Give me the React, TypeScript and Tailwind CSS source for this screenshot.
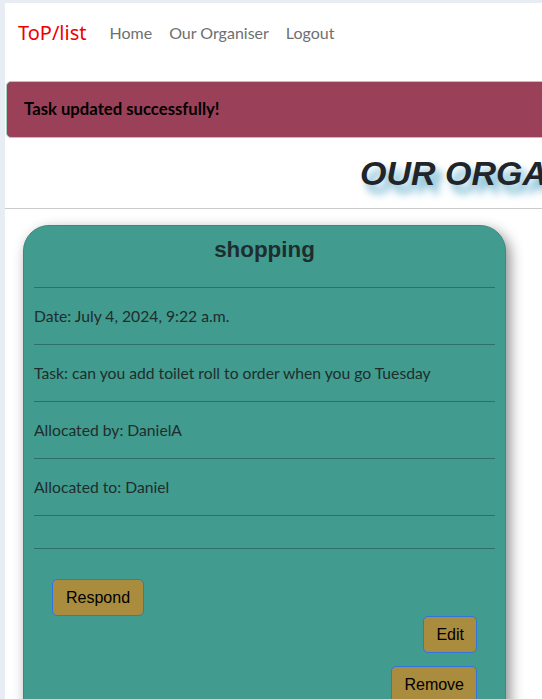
import React from "react";

const body = { fontFamily: 'Lato, "Noto Sans", sans-serif' };
const arial = { fontFamily: '"Liberation Sans", Arial, sans-serif' };

function Row({ children }: { children?: React.ReactNode }) {
  return (
    <>
      <div className="h-px bg-[#2f6f69]" />
      <p className="my-4 min-h-0 text-[15.7px] leading-6 text-[#1f2d2c]" style={body}>
        {children}
      </p>
    </>
  );
}

export default function App() {
  return (
    <div className="h-screen w-full overflow-hidden bg-[#e8ecf3] pl-[5px] pt-[3px]">
      <div className="h-full w-[900px] bg-white">
        {/* navbar */}
        <nav className="flex h-[60px] items-center pl-[13px]" style={body}>
          <span className="text-[20px] text-[#ee0000]" style={{ fontFamily: '"Noto Sans", sans-serif' }}>
            ToP/list
          </span>
          <div className="ml-[23px] flex gap-[17px] text-[16px] text-[#6f6f6f]">
            <span>Home</span>
            <span>Our Organiser</span>
            <span>Logout</span>
          </div>
        </nav>
        <div className="h-[18px]" />
        {/* alert */}
        <div
          className="ml-[1px] flex h-[57px] items-center rounded-[5px] border border-[#a3cfbb] bg-[#9a4159] pl-[17px]"
          style={body}
        >
          <span className="text-[16.7px] font-bold text-black">Task updated successfully!</span>
        </div>
        {/* heading */}
        <div className="flex h-[70px] items-center pl-[355px]">
          <h1
            className="whitespace-nowrap text-[34px] font-bold italic text-[#212529] [text-shadow:6px_8px_8px_#5aa9c9]"
            style={arial}
          >
            OUR ORGANISER
          </h1>
        </div>
        <div className="h-px w-full bg-[#c9cbcd]" />
        {/* card */}
        <div className="pl-[18px] pt-[16px]">
          <div className="w-[483px] rounded-[26px] border border-[#3a8a80] bg-[#419b8f] px-[10px] pt-[7px] pb-10 shadow-[4px_5px_14px_rgba(0,0,0,0.45)]">
            <h3
              className="mb-[20px] text-center text-[22.4px] font-bold leading-[34px] text-[#1e2d2d]"
              style={arial}
            >
              shopping
            </h3>
            <Row>Date: July 4, 2024, 9:22 a.m.</Row>
            <Row>Task: can you add toilet roll to order when you go Tuesday</Row>
            <Row>Allocated by: DanielA</Row>
            <Row>Allocated to: Daniel</Row>
            <div className="h-px bg-[#2f6f69]" />
            <div className="h-[32px]" />
            <div className="h-px bg-[#2f6f69]" />
            <div className="px-[18px] pt-[30px]" style={arial}>
              <div className="flex">
                <button className="h-[37px] rounded-[5px] border border-[#2f74e0] bg-[#a98c3e] px-[13px] text-[16px] text-black">
                  Respond
                </button>
              </div>
              <div className="flex justify-end">
                <button className="h-[37px] rounded-[5px] border border-[#2f74e0] bg-[#a98c3e] px-[12px] text-[16px] text-black">
                  Edit
                </button>
              </div>
              <div className="mt-[13px] flex justify-end">
                <button className="h-[37px] rounded-[5px] border border-[#2f74e0] bg-[#a98c3e] px-[12px] text-[16px] text-black">
                  Remove
                </button>
              </div>
            </div>
          </div>
        </div>
      </div>
    </div>
  );
}
